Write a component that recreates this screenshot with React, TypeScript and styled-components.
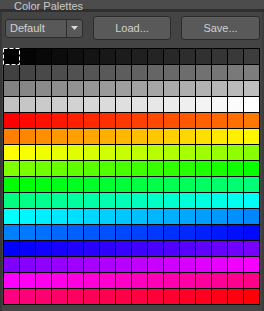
import React from "react";
import styled, { createGlobalStyle } from "styled-components";

const GlobalStyle = createGlobalStyle`
  html, body {
    margin: 0;
    padding: 0;
    background: #444444;
  }
  * {
    box-sizing: border-box;
  }
  body {
    font-family: "Liberation Sans", Arial, sans-serif;
  }
`;

const Window = styled.div`
  width: 264px;
  height: 311px;
  display: flex;
  flex-direction: column;
  overflow: hidden;
  background: #444444;
`;

const TitleBar = styled.div`
  height: 12px;
  background: #4c4c4c;
  border-bottom: 3px solid #2f2f2f;
  padding-left: 14px;
  font-size: 11px;
  line-height: 13px;
  color: #c8c8c8;
  white-space: nowrap;
`;

const Body = styled.div`
  flex: 1;
  display: flex;
  flex-direction: column;
  border-left: 2px solid #373737;
  border-right: 2px solid #3c3c3c;
`;

const Toolbar = styled.div`
  display: flex;
  align-items: center;
  gap: 10px;
  height: 24px;
  margin-top: 4px;
  padding-left: 3px;
`;

const Select = styled.div`
  width: 78px;
  height: 19px;
  display: flex;
  border: 1px solid #2c2c2c;
  border-radius: 3px;
  background: #585858;
  color: #d2d2d2;
  font-size: 11px;
`;

const SelectLabel = styled.div`
  flex: 1;
  padding-left: 4px;
  line-height: 17px;
`;

const SelectArrow = styled.div`
  width: 16px;
  border-left: 1px solid #2c2c2c;
  display: flex;
  align-items: center;
  justify-content: center;
`;

const Button = styled.button<{ $w: number }>`
  width: ${(p) => p.$w}px;
  height: 24px;
  padding: 0;
  border: 1px solid #2a2a2a;
  border-radius: 3px;
  background: #595959;
  box-shadow: inset 0 1px 0 #616161;
  color: #d0d0d0;
  font-family: "Liberation Sans", Arial, sans-serif;
  font-size: 11px;
`;

const Swatches = styled.div`
  margin-top: 8px;
  margin-left: 1px;
  width: 257px;
  display: grid;
  grid-template-columns: repeat(16, 15px);
  grid-auto-rows: 15px;
  gap: 1px;
  padding: 1px;
  background: #000000;
`;

const Swatch = styled.div`
  position: relative;
`;

const Marquee = styled.svg`
  position: absolute;
  left: -1px;
  top: -1px;
  width: 17px;
  height: 17px;
  overflow: visible;
`;

const colors: string[] = [];
for (let i = 0; i < 64; i++) {
  const v = Math.round((i * 255) / 63);
  colors.push(`rgb(${v},${v},${v})`);
}
for (let i = 0; i < 192; i++) {
  colors.push(`hsl(${(i * 360) / 192}, 100%, 50%)`);
}

export default function App() {
  return (
    <>
      <GlobalStyle />
      <Window>
        <TitleBar>Color Palettes</TitleBar>
        <Body>
          <Toolbar>
            <Select>
              <SelectLabel>Default</SelectLabel>
              <SelectArrow>
                <svg width="7" height="4" viewBox="0 0 7 4">
                  <polygon points="0,0 7,0 3.5,4" fill="#d8d8d8" />
                </svg>
              </SelectArrow>
            </Select>
            <Button $w={78}>Load...</Button>
            <Button $w={79}>Save...</Button>
          </Toolbar>
          <Swatches>
            {colors.map((c, i) => (
              <Swatch key={i} style={{ background: c }}>
                {i === 0 && (
                  <Marquee viewBox="0 0 17 17">
                    <rect
                      x="0.5"
                      y="0.5"
                      width="16"
                      height="16"
                      fill="none"
                      stroke="#ffffff"
                      strokeDasharray="4 2"
                    />
                  </Marquee>
                )}
              </Swatch>
            ))}
          </Swatches>
        </Body>
      </Window>
    </>
  );
}
